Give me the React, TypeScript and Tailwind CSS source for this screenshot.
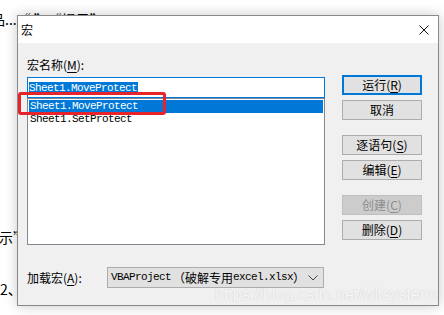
import React from "react";

const cjk = { fontFamily: '"Noto Sans CJK SC", "Noto Sans", sans-serif' };
const mono = { fontFamily: '"Liberation Mono", "DejaVu Sans Mono", monospace' };

function U({ c }: { c: string }) {
  return <span className="underline underline-offset-[2px]">{c}</span>;
}

function Btn({
  children,
  primary,
  disabled,
  className = "",
}: {
  children: React.ReactNode;
  primary?: boolean;
  disabled?: boolean;
  className?: string;
}) {
  const base = "h-[20px] w-full flex items-center justify-center text-[12px] leading-none";
  const look = primary
    ? "border-2 border-[#0078d7] bg-[#e1e1e1] text-black"
    : disabled
    ? "border border-[#bfbfbf] bg-[#cccccc] text-[#8c8c8c]"
    : "border border-[#adadad] bg-[#e1e1e1] text-black";
  return (
    <div className={`${base} ${look} ${className}`} style={cjk}>
      {children}
    </div>
  );
}

export default function App() {
  return (
    <div className="relative w-[444px] h-[315px] bg-white overflow-hidden text-black" style={cjk}>
      {/* background document text */}
      <div className="flex flex-col text-[14px] leading-[14px] text-black">
        <div className="mt-[12px] -ml-[9px] whitespace-nowrap">品...“ ”，“提示”</div>
        <div className="mt-[204px] -ml-[1px] whitespace-nowrap">示”</div>
        <div className="mt-[38px] whitespace-nowrap">2、“</div>
      </div>

      {/* dialog window */}
      <div className="absolute left-[17px] top-[15px] w-[422px] h-[291px] border border-[#8a8a8a] flex flex-col shadow-[0_0_12px_rgba(0,0,0,0.22)]">
        {/* title bar */}
        <div className="h-[27px] bg-white flex items-center justify-between pl-[3px] pr-[9px] shrink-0">
          <span className="text-[12px] leading-none">宏</span>
          <svg width="10" height="10" viewBox="0 0 10 10">
            <path d="M0.5 0.5 L9.5 9.5 M9.5 0.5 L0.5 9.5" stroke="#111" strokeWidth="1" fill="none" />
          </svg>
        </div>

        {/* body */}
        <div className="relative flex-1 bg-[#f0f0f0] pl-[9px] pt-[15px] flex flex-col">
          <div className="flex items-start">
            {/* left column */}
            <div className="w-[298px] flex flex-col">
              <div className="h-[14px] text-[12px] leading-[14px] whitespace-nowrap">
                宏名称(<U c="M" />):
              </div>
              <div className="mt-[5px] h-[21px] border border-[#0078d7] bg-white flex items-center px-[1px]">
                <span
                  className="bg-[#0078d7] text-white text-[11px] leading-[12px] h-[12px] tracking-[-0.6px] pr-[1px]"
                  style={mono}
                >
                  Sheet1.MoveProtect
                </span>
              </div>
              <div className="h-[147px] border border-[#828790] bg-white p-[1px] flex flex-col">
                <div
                  className="h-[13px] bg-[#0078d7] text-white text-[11px] leading-[13px] tracking-[-0.6px] pl-[1px]"
                  style={mono}
                >
                  Sheet1.MoveProtect
                </div>
                <div
                  className="h-[13px] text-black text-[11px] leading-[13px] tracking-[-0.6px] pl-[1px]"
                  style={mono}
                >
                  Sheet1.SetProtect
                </div>
              </div>
            </div>

            {/* buttons */}
            <div className="ml-[17px] mt-[17px] w-[80px] flex flex-col">
              <Btn primary>
                运行(<U c="R" />)
              </Btn>
              <Btn className="mt-[5px]">取消</Btn>
              <Btn className="mt-[15px]">
                逐语句(<U c="S" />)
              </Btn>
              <Btn className="mt-[5px]">
                编辑(<U c="E" />)
              </Btn>
              <Btn disabled className="mt-[15px]">
                创建(<U c="C" />)
              </Btn>
              <Btn className="mt-[5px]">
                删除(<U c="D" />)
              </Btn>
            </div>
          </div>

          {/* bottom row */}
          <div className="mt-[22px] flex items-center">
            <div className="w-[80px] text-[12px] leading-[14px] whitespace-nowrap">
              加载宏(<U c="A" />):
            </div>
            <div className="w-[217px] h-[21px] border border-[#adadad] bg-[#e1e1e1] flex items-center pl-[3px] pr-[5px]">
              <span className="flex-1 whitespace-nowrap text-[12px] leading-none flex items-center">
                <span className="text-[11px] tracking-[-0.6px]" style={mono}>
                  VBAProject
                </span>
                <span className="ml-[2px]">（破解专用</span>
                <span className="text-[11px] tracking-[-0.6px]" style={mono}>
                  excel.xlsx
                </span>
                <span>）</span>
              </span>
              <svg width="10" height="6" viewBox="0 0 10 6">
                <path d="M0.5 0.5 L5 5 L9.5 0.5" stroke="#444" strokeWidth="1" fill="none" />
              </svg>
            </div>
          </div>

          {/* watermark */}
          <div
            className="absolute left-[197px] top-[244px] text-[16px] leading-[16px] whitespace-nowrap text-white/90 [text-shadow:0_0_1px_rgba(0,0,0,0.25)]"
            style={{ fontFamily: '"Liberation Sans", Arial, sans-serif' }}
          >
            https://blog.csdn.net/wltsysterm
          </div>
        </div>
      </div>

      {/* red annotation box */}
      <div className="absolute left-[18px] top-[92px] w-[148px] h-[23px] border-[3px] border-[#e5252b] rounded-[3px]" />
    </div>
  );
}
